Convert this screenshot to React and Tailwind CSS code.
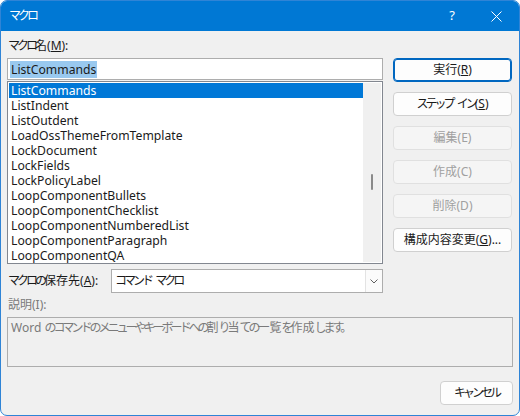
import React from 'react';

const items = [
  'ListCommands',
  'ListIndent',
  'ListOutdent',
  'LoadOssThemeFromTemplate',
  'LockDocument',
  'LockFields',
  'LockPolicyLabel',
  'LoopComponentBullets',
  'LoopComponentChecklist',
  'LoopComponentNumberedList',
  'LoopComponentParagraph',
  'LoopComponentQA',
];

const font = { fontFamily: '"Noto Sans", "Noto Sans CJK JP", sans-serif' };

// kana in the UI font are narrower than in Noto CJK; tighten them
const isKana = (c) => /[\u3040-\u30ff\u3002]/.test(c);
const jp = (str) => {
  const out = [];
  let buf = '';
  let kana = null;
  const flush = () => {
    if (!buf) return;
    out.push(
      kana ? (
        <span key={out.length} className="tracking-[-3px]">{buf}</span>
      ) : (
        <span key={out.length}>{buf}</span>
      )
    );
    buf = '';
  };
  for (const c of str) {
    if (c === ' ') {
      const afterKana = kana;
      flush();
      out.push(
        <span key={out.length} className={afterKana ? 'pl-[1px]' : ''}>
          {' '}
        </span>
      );
      kana = null;
      continue;
    }
    const k = isKana(c);
    if (kana !== null && k !== kana) flush();
    kana = k;
    buf += c;
  }
  flush();
  return out;
};

const Btn = ({ children, primary, disabled, className = '' }) => (
  <div
    className={`h-[24px] flex items-center justify-center rounded-[4px] text-[12px] ${
      primary
        ? 'border border-[#0067c0] bg-[#fdfdfd] text-[#1a1a1a] shadow-[inset_0_0_0_1px_#0067c0]'
        : disabled
        ? 'border border-[#e0e0e0] bg-[#f5f5f5] text-[#a0a0a0]'
        : 'border border-[#d0d0d0] bg-[#fdfdfd] text-[#1a1a1a]'
    } ${className}`}
  >
    <span>{children}</span>
  </div>
);

export default function App() {
  return (
    <div
      className="w-[520px] h-[416px] bg-[#f0f0f0] border border-[#2f84d6] rounded-[7px] overflow-hidden flex flex-col text-[#1a1a1a]"
      style={font}
    >
      <div className="h-[30px] shrink-0 bg-[#0078d4] text-white flex items-center pl-[8px] text-[12px]">
        <span className="flex-1">{jp('マクロ')}</span>
        <span className="w-[44px] text-center text-[13px]">?</span>
        <span className="w-[44px] flex items-center justify-center">
          <svg width="11" height="11" viewBox="0 0 11 11">
            <path d="M0.5 0.5 L10.5 10.5 M10.5 0.5 L0.5 10.5" stroke="white" strokeWidth="1" />
          </svg>
        </span>
        <span className="w-[1px]" />
      </div>

      <div className="flex pl-[6px] pr-[6px]">
        <div className="w-[376px] flex flex-col">
          <div className="h-[16px] mt-[7px] pl-[1px] leading-[16px] text-[12px]">
            {jp('マクロ名(')}
            <u>M</u>):
          </div>
          <div className="mt-[4px] h-[22px] bg-white border border-[#adadad] flex items-center pl-[2px]">
            <span className="bg-[#99c9ef] px-[1px] text-[12.2px] leading-[17px]">ListCommands</span>
          </div>
          <div className="mt-[1px] h-[183px] bg-white border border-[#828790] flex p-[1px]">
            <div className="flex-1 flex flex-col">
              {items.map((it, i) => (
                <div
                  key={it}
                  className={`h-[15px] leading-[15px] pl-[2px] text-[12.2px] ${
                    i === 0 ? 'bg-[#0078d7] text-white' : ''
                  }`}
                >
                  {it}
                </div>
              ))}
            </div>
            <div className="w-[18px] bg-[#f0f0f0] flex flex-col items-center pt-[91px]">
              <div className="w-[2px] h-[16px] bg-[#8a8a8a] rounded-full" />
            </div>
          </div>
          <div className="mt-[5px] flex items-center">
            <div className="w-[104px] pl-[1px] text-[12px]">
              {jp('マクロの保存先(')}
              <u>A</u>):
            </div>
            <div className="flex-1 h-[24px] bg-white border border-[#adadad] flex">
              <div className="flex-1 flex items-center pl-[3px] text-[12px]">
                <span>{jp('コマンド マクロ')}</span>
              </div>
              <div className="w-[17px] border-l border-[#e3e3e3] bg-[#fbfbfb] flex items-center justify-center">
                <svg width="8" height="5" viewBox="0 0 8 5">
                  <path d="M0.5 0.5 L4 4 L7.5 0.5" stroke="#606060" fill="none" strokeWidth="1" />
                </svg>
              </div>
            </div>
          </div>
        </div>

        <div className="ml-[10px] w-[119px] pt-[27px] flex flex-col gap-[10px]">
          <Btn primary>
            実行(<u>R</u>)
          </Btn>
          <Btn>
            {jp('ステップ イン(')}
            <u>S</u>)
          </Btn>
          <Btn disabled>編集(E)</Btn>
          <Btn disabled>作成(C)</Btn>
          <Btn disabled>削除(D)</Btn>
          <Btn>
            構成内容変更(<u>G</u>)...
          </Btn>
        </div>
      </div>

      <div className="mt-[4px] ml-[7px] h-[16px] leading-[16px] text-[12px] text-[#7a7a7a]">説明(I):</div>
      <div className="mt-[4px] ml-[6px] w-[506px] h-[50px] border border-[#adadad] bg-[#f0f0f0] px-[3px] pt-[1px] text-[12px] text-[#7a7a7a]">
        {jp('Word のコマンドのメニューやキーボードへの割り当ての一覧を作成します。')}
      </div>
      <div className="flex justify-end pr-[6px] mt-[14px]">
        <Btn className="w-[73px]">{jp('キャンセル')}</Btn>
      </div>
    </div>
  );
}
